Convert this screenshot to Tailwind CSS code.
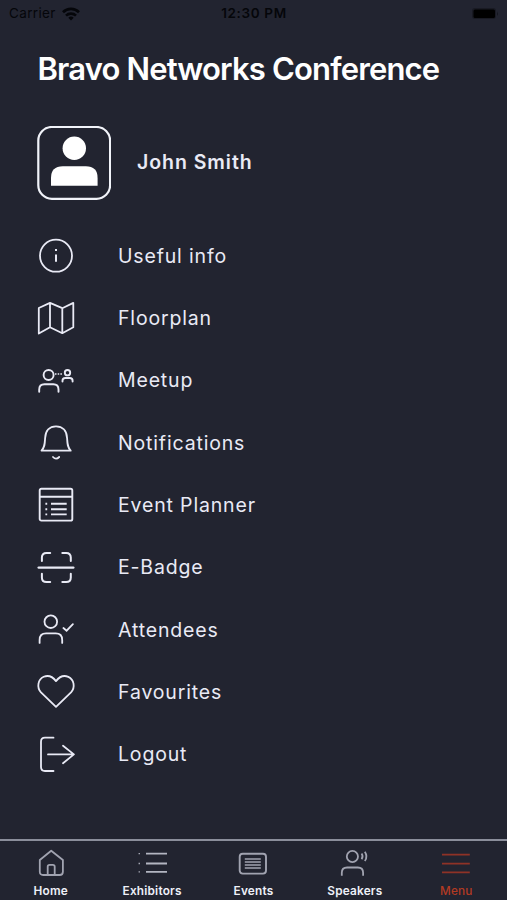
<!DOCTYPE html>
<html lang="en">
<head>
<meta charset="utf-8">
<title>Bravo Networks Conference</title>
<script src="https://cdn.jsdelivr.net/npm/@tailwindcss/browser@4"></script>
</head>
<body class="bg-[#222430]">
<div class="w-[507px] h-[900px] flex flex-col overflow-hidden bg-[#222430] font-['Inter','Liberation_Sans',sans-serif] text-[#e9eaf5]">
  <header class="h-7 shrink-0 grid grid-cols-3 items-center pl-[9px] pr-[8px] text-[#05060a] text-[13.5px] leading-none">
    <div class="flex items-center gap-[6px]">
      <span class="tracking-[0.35px]">Carrier</span>
      <svg class="w-[18px] h-[14px]" viewBox="0 0 18 14" fill="none" stroke="#05060a" stroke-width="2.7"><path d="M1 5.2a11.500 11.500 0 0 1 16 0M4 8.600a7.200 7.200 0 0 1 10 0"/><path d="M9 13.500 6.300 10.800a4 4 0 0 1 5.400 0z" fill="#05060a" stroke="none"/></svg>
    </div>
    <span class="text-center font-semibold tracking-[0.65px] whitespace-nowrap">12:30 PM</span>
    <svg class="justify-self-end w-[28px] h-[14px]" viewBox="0 0 28 14"><rect x="1" y="1" width="24" height="11" rx="3" fill="#191a23"/><rect x="2.500" y="2.500" width="21.500" height="8.500" rx="1.500" fill="#000"/><path d="M26 4.500q1.500 2 0 4.500z" fill="#111219"/></svg>
  </header>
  <h1 class="h-[82px] shrink-0 pl-[37.500px] text-white text-[31px] font-semibold tracking-[-0.84px] leading-[82px] whitespace-nowrap">Bravo Networks Conference</h1>
  <section class="h-[115px] shrink-0 flex items-center pl-[37px] pt-[3px] pb-[12px] gap-[26px]">
    <svg class="w-[74px] h-[74px]" viewBox="0 0 74 74"><rect x="1.300" y="1" width="71.800" height="71.800" rx="13.500" fill="none" stroke="#f1f3f9" stroke-width="2.200"/><circle cx="37.300" cy="22.300" r="11.700" fill="#fff"/><path d="M14 59.700V52q0-11.800 11.800-11.800h23q11.800 0 11.800 11.800v7.700z" fill="#fff"/></svg>
    <span class="text-[19.5px] font-semibold tracking-[0.95px] pb-px">John Smith</span>
  </section>
  <nav class="h-[561px] shrink-0 grid grid-rows-9 pl-[36px] text-[19.5px] tracking-[0.84px]">
    <a class="flex items-center gap-[42px]"><svg class="w-10 h-10" viewBox="0 0 40 40" fill="none" stroke="#e9eaf5" stroke-width="1.8"><circle cx="20" cy="19.700" r="16"/><path d="M20 18.500v7.200M20 13v2" stroke-width="2"/></svg><span>Useful info</span></a>
    <a class="flex items-center gap-[42px]"><svg class="w-10 h-10" viewBox="0 0 40 40" fill="none" stroke="#e9eaf5" stroke-width="1.8" stroke-linejoin="round"><path d="M2.800 10 14 4.900l12.300 5.300 11-5.300v24.400l-11 5.900L14 29.200 2.800 35.500zM14 4.900v24.300M26.300 10.200v25"/></svg><span>Floorplan</span></a>
    <a class="flex items-center gap-[42px]"><svg class="w-10 h-10" viewBox="0 0 40 40" fill="none" stroke="#e9eaf5" stroke-width="1.9" stroke-linecap="round"><circle cx="12.600" cy="14" r="5"/><path d="M3.200 30.700v-2.200q0-5.300 5.300-5.300h8.800q5.200 0 5.200 5.300v2.200"/><circle cx="31.500" cy="11.700" r="2.700"/><path d="M26.500 20.500v-.7q0-2.800 2.800-2.800h4.500q2.800 0 2.800 2.800v.7"/><path d="M19 13h7.500" stroke-width="1.300" stroke-dasharray="1.500 1.200" stroke-linecap="butt"/></svg><span>Meetup</span></a>
    <a class="flex items-center gap-[42px]"><svg class="w-10 h-10" viewBox="0 0 40 40" fill="none" stroke="#e9eaf5" stroke-width="1.8" stroke-linecap="round" stroke-linejoin="round"><path d="M5.500 27.700h29.200c-3.300-3.600-3.300-7-3.600-12.500C30.800 7.700 26.500 3.300 20 3.300S9.400 7.700 9.100 15.200C8.800 20.700 8.800 24.100 5.500 27.700zM17 34q3 3.200 6.200 0"/></svg><span>Notifications</span></a>
    <a class="flex items-center gap-[42px]"><svg class="w-10 h-10" viewBox="0 0 40 40" fill="none" stroke="#e9eaf5" stroke-width="1.9"><rect x="3.700" y="3.700" width="32.600" height="31.900" rx="1.700"/><path d="M3.700 11.800h32.600M15 18.700h15.700M15 24.200h15.700M15 29.400h15.700M9.400 18.700h1.800M9.400 24.200h1.800M9.400 29.400h1.800"/></svg><span>Event Planner</span></a>
    <a class="flex items-center gap-[42px]"><svg class="w-10 h-10" viewBox="0 0 40 40" fill="none" stroke="#e9eaf5" stroke-width="2" stroke-linecap="round"><path d="M5.900 13V9.600Q5.900 5 10.500 5h3.700M26.300 5h3.900q4.600 0 4.600 4.600V13M5.900 25.700v3.800q0 4.600 4.600 4.600h3.700M26.300 34.100h3.900q4.600 0 4.600-4.600v-3.800"/><path d="M2.700 19.600h34.600" stroke-width="2.400"/></svg><span>E-Badge</span></a>
    <a class="flex items-center gap-[42px]"><svg class="w-10 h-10" viewBox="0 0 40 40" fill="none" stroke="#e9eaf5" stroke-width="1.8" stroke-linecap="round"><circle cx="14.800" cy="11.700" r="6.300"/><path d="M3.600 32.900v-3q0-6.500 6.500-6.500h9.600q6.500 0 6.500 6.500v3M27.400 18l3.200 2.700 6.300-6.500"/></svg><span>Attendees</span></a>
    <a class="flex items-center gap-[42px]"><svg class="w-10 h-10" viewBox="0 0 40 40" fill="none" stroke="#e9eaf5" stroke-width="1.8" stroke-linejoin="round"><path d="M20 34.800 5 20.300C.4 15.300 2 7.300 7.700 4.800 12 3 16.500 4.500 20 9.100 23.500 4.500 28 3 32.300 4.800 38 7.300 39.600 15.300 35 20.300z"/></svg><span>Favourites</span></a>
    <a class="flex items-center gap-[42px]"><svg class="w-10 h-10" viewBox="0 0 40 40" fill="none" stroke="#e9eaf5" stroke-width="1.800" stroke-linecap="round" stroke-linejoin="round"><path d="M17.500 2.700H9q-4 0-4 4V32q0 4 4 4h8.500M12 19.400h25.700M27 10.800l10.900 8.600L27 28.200"/></svg><span>Logout</span></a>
  </nav>
  <footer class="mt-auto h-[61px] shrink-0 border-t-2 border-[#8b8e9b] grid grid-cols-5 text-[11.8px] font-semibold leading-none tracking-[0.2px] text-[#eef0f8] text-center">
    <a class="flex flex-col items-center pt-[6px] gap-[7px]"><svg class="w-8 h-8 shrink-0" viewBox="0 0 32 32" fill="none" stroke="#a1a3b0" stroke-width="1.800" stroke-linejoin="round"><path d="M4.800 13 16.200 3.800 27.900 13v11.700q0 3.300-3.300 3.300H8.100q-3.300 0-3.300-3.300zM12.700 28v-8.200q0-1.900 1.900-1.900h3.200q1.900 0 1.900 1.900V28"/></svg><span>Home</span></a>
    <a class="flex flex-col items-center pt-[6px] gap-[7px]"><svg class="w-8 h-8 shrink-0" viewBox="0 0 32 32" fill="none" stroke="#b3b5c1" stroke-width="1.800"><path d="M10 6.700h21M10 16.500h21M10 24.900h21"/><path d="M2.600 6.700h1.300M2.600 16.500h1.300M2.600 24.900h1.300" stroke-width="1.300"/></svg><span>Exhibitors</span></a>
    <a class="flex flex-col items-center pt-[6px] gap-[7px]"><svg class="w-8 h-8 shrink-0" viewBox="0 0 32 32" fill="none" stroke="#a1a3b0" stroke-width="1.900"><rect x="2.700" y="6.800" width="26.300" height="19.800" rx="3"/><path d="M7.800 12h16M7.800 15h16M7.800 18h16M7.800 21h16" stroke-width="1.600"/></svg><span>Events</span></a>
    <a class="flex flex-col items-center pt-[6px] gap-[7px]"><svg class="w-8 h-8 shrink-0" viewBox="0 0 32 32" fill="none" stroke="#a1a3b0" stroke-width="1.800"><circle cx="13.400" cy="9.500" r="5.600"/><path d="M2.800 28.800v-3q0-5.300 5.300-5.300h10.700q5.300 0 5.300 5.300v3M22.600 6.600q2 2.800 0 5.600M25.800 4.700q3.300 4.700 0 9.400"/></svg><span>Speakers</span></a>
    <a class="flex flex-col items-center pt-[6px] gap-[7px] text-[#b33a23] font-medium"><svg class="w-8 h-8 shrink-0" viewBox="0 0 32 32" fill="none" stroke="#8f3226" stroke-width="1.800"><path d="M2 7.700h27.800M2 16.600h27.800M2 25.400h27.800"/></svg><span>Menu</span></a>
  </footer>
</div>
</body>
</html>
